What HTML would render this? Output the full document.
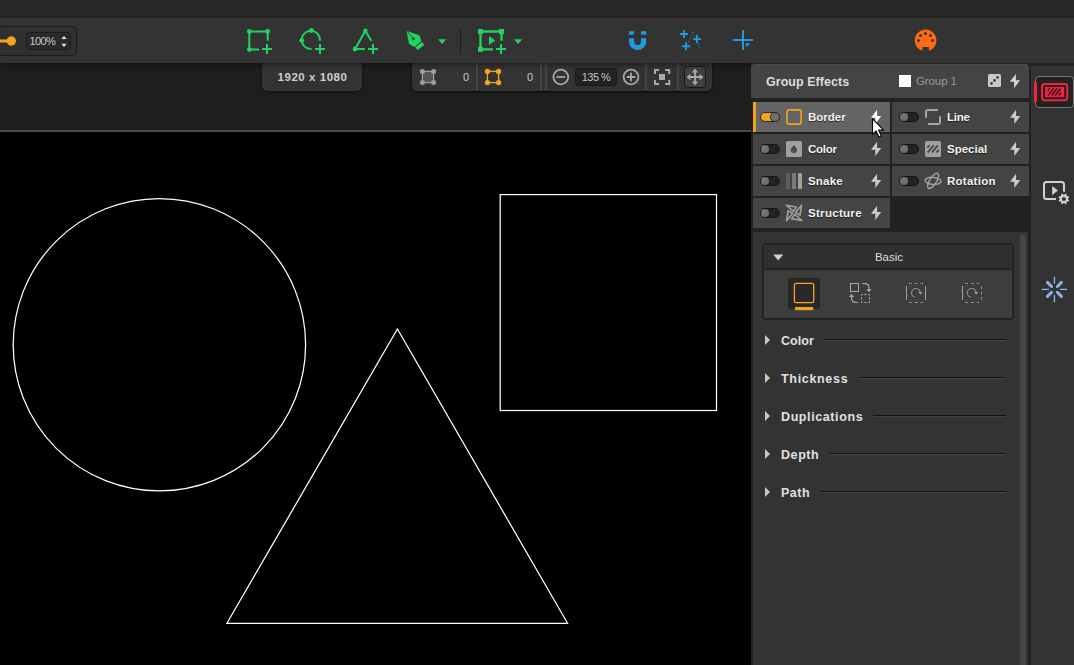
<!DOCTYPE html>
<html lang="en">
<head>
<meta charset="utf-8">
<title>Group Effects</title>
<style>
*{box-sizing:border-box;margin:0;padding:0}
html,body{width:1074px;height:665px;overflow:hidden;background:#1e1e1e;font-family:"Liberation Sans",sans-serif;color:#ddd}
#app{position:relative;width:1074px;height:665px;overflow:hidden;background:#1e1e1e}
.abs{position:absolute}
#topstrip{left:0;top:0;width:1074px;height:18px;background:#282828}
#toolbar{left:0;top:18px;width:1074px;height:45px;background:#333;box-shadow:0 1px 5px rgba(0,0,0,.6)}
#zoombox{left:-4px;top:26px;width:81px;height:30px;border:1px solid #1c1c1c;border-radius:5px;background:#303030}
#spin{left:26px;top:32px;width:45px;height:18px;border:1px solid #1c1c1c;border-radius:4px;background:#2a2a2a;font-size:11px;line-height:16px;color:#c8c8c8;padding-left:2.5px;letter-spacing:-.6px}
#canvasline{left:0;top:130px;width:751px;height:2px;background:#4a4a4a}
#canvas{left:0;top:132px;width:751px;height:533px;background:#000}
#dims{left:262px;top:63px;width:100px;height:28px;background:#333;border-radius:0 0 5px 5px;box-shadow:0 1px 3px rgba(0,0,0,.6);font-size:11.5px;font-weight:bold;letter-spacing:.55px;color:#cfcfcf;text-align:center;line-height:28px;padding-left:1px}
#ctb{left:412px;top:63px;width:300px;height:28px;background:#333;border-radius:0 0 5px 5px;box-shadow:0 1px 3px rgba(0,0,0,.6)}
.sep{position:absolute;top:0;width:2px;height:27px;background:#454545}
.num{position:absolute;top:0;font-size:11px;line-height:28px;color:#c4c4c4;text-align:right;width:20px}
#zpct{left:163px;top:5px;width:42px;height:18px;background:#222;border:1px solid #191919;border-radius:3px;font-size:11px;line-height:16px;text-align:center;color:#c4c4c4;letter-spacing:-.5px}
#movebtn{left:272px;top:3px;width:22px;height:22px;background:#3f4141;border:1px solid #181818;border-radius:4px}
/* right panel */
#ghead{left:751px;top:64px;width:278px;height:34px;background:#444;border-radius:4px 4px 0 0;border-top:1px solid #4e4e4e}
#gtitle{left:15px;top:-1px;font-size:12.5px;letter-spacing:.04px;font-weight:bold;line-height:36px;color:#dcdcdc}
#gname{left:165px;top:-1px;font-size:11.5px;letter-spacing:-.1px;line-height:34px;color:#9a9a9a}
.row{position:absolute;height:30px;background:#444}
.row.l{left:753px;width:137px}
.row.r{left:892px;width:137px}
.row.sel{background:#646464;border-left:3px solid #f5a21d}
.tog{position:absolute;left:7px;top:10px;width:20px;height:10px;border-radius:5px;background:#222;border:1px solid #151515}
.tog i{position:absolute;left:0;top:0;width:8px;height:8px;border-radius:4px;background:#727272}
.row.sel .tog{left:4px;background:#f5a21d;border-color:#2a2a2a}
.row.sel .tog i{left:10px;background:#707070;box-shadow:0 0 0 1px #2a2a2a}
.ico{position:absolute;left:33px;top:7px;width:16px;height:16px}
.row.sel .ico{left:30px}
.lbl{position:absolute;left:55px;top:0;font-size:11.5px;font-weight:bold;line-height:30px;color:#f2f2f2;text-shadow:0 1px 1px rgba(0,0,0,.6)}
.row.sel .lbl{left:52px}
.bolt{position:absolute;left:117px;top:8px;width:12px;height:15px}
.row.sel .bolt{left:114px}
#lower{left:753px;top:232px;width:275px;height:433px;background:#333}
#pbg{left:751px;top:63px;width:280px;height:602px;background:#222}
#scroll{left:1020px;top:234px;width:6px;height:440px;background:#464646;border-radius:3px}
#basic{left:762px;top:243px;width:252px;height:77px;border:2px solid #232323;border-radius:4px;background:#3c3e3d;overflow:hidden}
#basichd{left:0;top:0;width:248px;height:25px;background:#303030;border-bottom:2px solid #232323;font-size:11.5px;line-height:24px;text-align:center;color:#ddd;padding-left:2px}
#selbtn{left:24px;top:33px;width:32px;height:31px;background:#292929;border-radius:3px;border:1px solid #252525}
.sec{position:absolute;left:765px;width:241px;height:20px}
.sec .tri{position:absolute;left:0;top:5px;width:0;height:0;border-left:5.5px solid #c8c8c2;border-top:5px solid transparent;border-bottom:5px solid transparent}
.sec span{position:absolute;left:16px;top:0;font-size:12.5px;letter-spacing:.5px;font-weight:bold;line-height:23px;color:#e0e0e0}
.sec b{position:absolute;right:0;top:9px;height:2px;background:#121212;border-bottom:1px solid #444}
/* sidebar */
#sidetop{left:1029px;top:63px;width:45px;height:3px;background:#222}
#sidegap{left:1029px;top:63px;width:2px;height:602px;background:#222}
#side{left:1031px;top:66px;width:43px;height:599px;background:#333}
#sbtn{left:1035px;top:76px;width:39px;height:32px;background:#222;border:1px solid #777;border-radius:4px}
#sbar{left:1034px;top:82px;width:3px;height:20px;background:#f5213d}
svg{position:absolute;overflow:visible}
</style>
</head>
<body>
<div id="app">
  <div class="abs" id="topstrip"></div>
  <div class="abs" id="canvasline"></div>
  <div class="abs" id="canvas"></div>
  <svg class="abs" style="left:0;top:0" width="751" height="665" viewBox="0 0 751 665" fill="none" stroke="#fff" stroke-width="1.25">
    <circle cx="159.4" cy="344.7" r="146.2"/>
    <rect x="500.2" y="194.6" width="216.3" height="215.9"/>
    <path d="M397.4 329 L567.6 623.3 L226.9 623.3 Z"/>
  </svg>
  <div class="abs" id="dims">1920 x 1080</div>
  <div class="abs" id="ctb">
    <div class="sep" style="left:64px"></div>
    <div class="sep" style="left:128px"></div>
    <div class="sep" style="left:133px"></div>
    <div class="sep" style="left:233px"></div>
    <div class="sep" style="left:265px"></div>
    <div class="num" style="left:37px">0</div>
    <div class="num" style="left:101px">0</div>
    <div class="abs" id="zpct">135 %</div>
    <div class="abs" id="movebtn"></div>
  </div>

  <!-- canvas toolbar icons -->
  <svg class="abs" style="left:0;top:0" width="1074" height="100" viewBox="0 0 1074 100">
    <g>
      <rect x="422.4" y="71.4" width="11.2" height="11.2" fill="#555" stroke="#9c9c9c" stroke-width="1.3"/>
      <g fill="#9c9c9c"><circle cx="422.4" cy="71.4" r="2.5"/><circle cx="433.6" cy="71.4" r="2.5"/><circle cx="422.4" cy="82.6" r="2.5"/><circle cx="433.6" cy="82.6" r="2.5"/></g>
      <rect x="487.4" y="71.4" width="11.2" height="11.2" fill="none" stroke="#f9a51a" stroke-width="1.3"/>
      <g fill="#f9a51a"><circle cx="487.4" cy="71.4" r="2.6"/><circle cx="498.6" cy="71.4" r="2.6"/><circle cx="487.4" cy="82.6" r="2.6"/><circle cx="498.6" cy="82.6" r="2.6"/></g>
    </g>
    <g fill="none" stroke="#a8a8a8" stroke-width="1.8">
      <circle cx="560.8" cy="77" r="7.4"/><path d="M556.5 77 H565.1"/>
      <circle cx="631" cy="77" r="7.4"/><path d="M626.7 77 H635.3 M631 72.7 V81.3"/>
      <path d="M655 74 V70 H659 M665.2 70 H669.2 V74 M669.2 80 V84 H665.2 M659 84 H655 V80" stroke-width="2"/>
    </g>
    <rect x="659" y="74" width="6" height="6" fill="#a8a8a8"/>
    <g fill="#a8a8a8" stroke="#a8a8a8" stroke-width="1.8">
      <path d="M689 77 H701 M695 71 V83" fill="none"/>
      <path d="M695 68.6 L698.2 72.4 H691.8 Z M695 85.4 L698.2 81.6 H691.8 Z M686.6 77 L690.4 73.8 V80.2 Z M703.4 77 L699.6 73.8 V80.2 Z" stroke="none"/>
    </g>
  </svg>
  <div class="abs" id="toolbar"></div>
  <div class="abs" id="zoombox"></div>
  <div class="abs" id="spin">100%</div>


  <!-- toolbar icons -->
  <svg class="abs" style="left:0;top:0" width="1074" height="64" viewBox="0 0 1074 64">
    <!-- slider -->
    <rect x="-2" y="39.5" width="12" height="3" fill="#f5a21d"/>
    <circle cx="11.3" cy="41" r="4.7" fill="#f5a21d"/>
    <!-- spin arrows -->
    <path d="M61.4 39 L66.6 39 L64 35.9 Z M61.4 43.8 L66.6 43.8 L64 46.9 Z" fill="#e6e6e6"/>
    <g fill="#1fd45f" stroke="#1fd45f" stroke-width="2" stroke-linecap="butt">
      <!-- rect+ -->
      <path d="M267.7 40.7 V31.5 H249.3 V49.6 H259" fill="none"/>
      <circle cx="249.3" cy="31.5" r="2.4" stroke="none"/><circle cx="267.7" cy="31.5" r="2.4" stroke="none"/><circle cx="249.3" cy="49.6" r="2.4" stroke="none"/>
      <path d="M262 49 H272 M267 44 V54" fill="none"/>
      <!-- circle+ -->
      <path d="M319.9 40.8 A9.1 9.1 0 1 0 311.5 49" fill="none" stroke-width="1.9"/>
      <circle cx="311.3" cy="30.5" r="2.4" stroke="none"/><circle cx="301.7" cy="40.4" r="2.4" stroke="none"/>
      <path d="M315 49 H325 M320 44 V54" fill="none"/>
      <!-- triangle+ -->
      <path d="M371.3 40.7 L365.4 30.8 L355.1 49 H364.8" fill="none" stroke-linejoin="round"/>
      <circle cx="365.4" cy="30.8" r="2.2" stroke="none"/><circle cx="355.1" cy="49" r="2.4" stroke="none"/>
      <path d="M368 49 H378 M373 44 V54" fill="none"/>
      <!-- pen -->
      <path d="M406.4 30.7 L419.6 35.5 L421.3 40.9 L414.8 46.9 L409.1 43.9 Z" stroke="none"/>
      <path d="M422.1 41.8 L424.2 45 L417.7 50.1 L415.4 47.5 Z" stroke="none"/>
      <circle cx="413.4" cy="38.7" r="1.5" fill="#333" stroke="none"/>
      <path d="M406.8 31.2 L412.6 37.8" stroke="#333" stroke-width=".8" fill="none"/>
      <path d="M438 39.2 H446.2 L442.1 44 Z" stroke="none"/>
      <!-- play rect + -->
      <path d="M501.5 40.8 V31.5 H480.5 V49.3 H493" fill="none" stroke-width="2.3"/>
      <rect x="478" y="29" width="5" height="5" stroke="none"/><rect x="499" y="29" width="5" height="5" stroke="none"/><rect x="478" y="46.8" width="5" height="5" stroke="none"/>
      <path d="M489 36.1 L495.3 40.5 L489 45 Z" stroke="none"/>
      <path d="M496 49 H506 M501 44 V54" fill="none"/>
      <path d="M514 39.2 H522.2 L518.1 44 Z" stroke="none"/>
    </g>
    <rect x="460" y="28" width="1" height="26" fill="#1e1e1e"/>
    <g fill="#1e9be0" stroke="#1e9be0">
      <!-- magnet -->
      <rect x="629" y="31.2" width="5.1" height="3.5" stroke="none"/><rect x="641.1" y="31.2" width="5.1" height="3.5" stroke="none"/>
      <path d="M629 38.2 H634.1 V41.4 A3.5 3.5 0 0 0 641.1 41.4 V38.2 H646.2 V41.4 A8.6 8.6 0 0 1 629 41.4 Z" stroke="none"/>
      <!-- sparkle -->
      <path d="M680 34 H688 M684 30 V38 M693 39.1 H701 M697 35.1 V43.1 M682 46.3 H690 M686 42.3 V50.3" stroke-width="1.9" fill="none"/>
      <path d="M692.8 31.8 L687.5 44.5 M693 32 L700.8 50" stroke-width=".9" stroke-dasharray="1.6 1.6" fill="none" opacity=".75"/>
      <!-- crosshair -->
      <path d="M732.8 40 H753.1 M743 29.9 V50" stroke-width="2" fill="none"/>
      <path d="M745.9 43.2 H750.5 L745.9 47.6 Z" stroke="none"/>
    </g>
    <!-- midi -->
    <g>
      <path d="M922.3 50.8 A10.85 10.85 0 1 1 928.9 50.8 V47.1 H922.3 Z" fill="#ff6a10"/>
      <g fill="#333"><circle cx="925.4" cy="33.4" r="1.5"/><circle cx="920.5" cy="35.5" r="1.5"/><circle cx="930.5" cy="35.5" r="1.5"/><circle cx="918.5" cy="40.5" r="1.5"/><circle cx="932.5" cy="40.5" r="1.5"/></g>
    </g>
  </svg>

  <div class="abs" id="pbg"></div>
  <div class="abs" id="ghead">
    <div class="abs" id="gtitle">Group Effects</div>
    <div class="abs" style="left:148px;top:10px;width:12px;height:12px;background:#fff"></div>
    <div class="abs" id="gname">Group 1</div>
  </div>
  <div class="row l sel" style="top:102px"><div class="tog"><i></i></div><div class="lbl">Border</div></div>
  <div class="row r" style="top:102px"><div class="tog"><i></i></div><div class="lbl" style="letter-spacing:-0.22px">Line</div></div>
  <div class="row l" style="top:134px"><div class="tog"><i></i></div><div class="lbl" style="letter-spacing:-0.25px">Color</div></div>
  <div class="row r" style="top:134px"><div class="tog"><i></i></div><div class="lbl">Special</div></div>
  <div class="row l" style="top:166px"><div class="tog"><i></i></div><div class="lbl" style="letter-spacing:0.18px">Snake</div></div>
  <div class="row r" style="top:166px"><div class="tog"><i></i></div><div class="lbl" style="letter-spacing:0.26px">Rotation</div></div>
  <div class="row l" style="top:198px"><div class="tog"><i></i></div><div class="lbl" style="letter-spacing:0.3px">Structure</div></div>

  <div class="abs" id="lower"></div>
  <div class="abs" id="scroll"></div>
  <div class="abs" id="basic">
    <div class="abs" id="basichd">Basic</div>
    <div class="abs" id="selbtn"></div>
  </div>
  <div class="sec" style="top:330px"><i class="tri"></i><span style="letter-spacing:.05px">Color</span><b style="left:59px"></b></div>
  <div class="sec" style="top:368px"><i class="tri"></i><span style="letter-spacing:.68px">Thickness</span><b style="left:93px"></b></div>
  <div class="sec" style="top:406px"><i class="tri"></i><span style="letter-spacing:.6px">Duplications</span><b style="left:108px"></b></div>
  <div class="sec" style="top:444px"><i class="tri"></i><span style="letter-spacing:.58px">Depth</span><b style="left:64px"></b></div>
  <div class="sec" style="top:482px"><i class="tri"></i><span style="letter-spacing:.5px">Path</span><b style="left:55px"></b></div>

  <div class="abs" id="sidetop"></div>
  <div class="abs" id="sidegap"></div>
  <div class="abs" id="side"></div>
  <div class="abs" id="sbtn"></div>
  <div class="abs" id="sbar"></div>

  <!-- panel icons -->
  <svg class="abs" style="left:0;top:0" width="1074" height="665" viewBox="0 0 1074 665">
<rect x="988" y="74" width="13" height="13" rx="1.6" fill="#c8c9c8"/>
<g fill="#444"><circle cx="997.5" cy="77.5" r="1.4"/><circle cx="994.5" cy="80.5" r="1.4"/><circle cx="991.5" cy="83.5" r="1.4"/></g>
<path d="M1015.9 73.9 L1015.9 80.2 L1020.1 80.2 L1014.1 88.2 L1014.1 81.8 L1009.8 81.8 Z" fill="#d2d5d5"/>
<path d="M877.1 109.8 L877.1 116.1 L881.3 116.1 L875.3 124.1 L875.3 117.7 L871.0 117.7 Z" fill="#fff"/>
<path d="M877.1 141.8 L877.1 148.1 L881.3 148.1 L875.3 156.1 L875.3 149.7 L871.0 149.7 Z" fill="#c9cccc"/>
<path d="M877.1 173.8 L877.1 180.1 L881.3 180.1 L875.3 188.1 L875.3 181.7 L871.0 181.7 Z" fill="#c9cccc"/>
<path d="M877.1 205.8 L877.1 212.1 L881.3 212.1 L875.3 220.1 L875.3 213.7 L871.0 213.7 Z" fill="#c9cccc"/>
<path d="M1016.1 109.8 L1016.1 116.1 L1020.3 116.1 L1014.3 124.1 L1014.3 117.7 L1010.0 117.7 Z" fill="#c9cccc"/>
<path d="M1016.1 141.8 L1016.1 148.1 L1020.3 148.1 L1014.3 156.1 L1014.3 149.7 L1010.0 149.7 Z" fill="#c9cccc"/>
<path d="M1016.1 173.8 L1016.1 180.1 L1020.3 180.1 L1014.3 188.1 L1014.3 181.7 L1010.0 181.7 Z" fill="#c9cccc"/>
<rect x="787" y="109.9" width="14.2" height="14.2" rx="2.4" fill="none" stroke="#f5a21d" stroke-width="1.6"/>
<rect x="786" y="141" width="16" height="16" rx="1.6" fill="#9fa1a0"/>
<path d="M793.9 145.1 C795.5 147.2 797 148.6 797 150 A3.1 3 0 0 1 790.8 150 C790.8 148.6 792.3 147.2 793.9 145.1 Z" fill="#454545"/>
<path d="M792.2 149.5 A1.9 1.9 0 0 0 795.2 151.4 A2.6 2.6 0 0 1 792.2 149.5 Z" fill="#9fa1a0" opacity=".85"/>
<rect x="786" y="173" width="4" height="16" fill="#5c5e60"/><rect x="792" y="173" width="4" height="16" fill="#7c7a78"/><rect x="798" y="173" width="4" height="16" rx="1" fill="#a0a2a0"/>
<g transform="translate(794.1 212.9)" fill="none" stroke="#9c9e9e" stroke-width="1.7" stroke-linejoin="round"><path d="M-7.7 -7.5 L2.3 -5.9 L-0.6 -1.5 Z" transform="rotate(0)"/><path d="M-7.7 -7.5 L2.3 -5.9 L-0.6 -1.5 Z" transform="rotate(90)"/><path d="M-7.7 -7.5 L2.3 -5.9 L-0.6 -1.5 Z" transform="rotate(180)"/><path d="M-7.7 -7.5 L2.3 -5.9 L-0.6 -1.5 Z" transform="rotate(270)"/></g>
<path d="M926 117.8 V112.1 Q926 110.1 928 110.1 H938 M928 124 H938 Q940 124 940 122 V116.2" fill="none" stroke="#a4a6a5" stroke-width="2"/>
<rect x="925" y="141" width="16" height="16" rx="1.6" fill="#a0a2a1"/>
<path d="M929.8 145.4 L927.2 147.6 M933.9 145.4 L927.6 152.4 M938 145.4 L931.9 152.4 M939 149.9 L936.4 152.4" stroke="#454545" stroke-width="1.7" fill="none"/>
<g fill="none" stroke="#9c9ea0" stroke-width="1.5"><ellipse cx="933.1" cy="180.9" rx="3.4" ry="8.7" transform="rotate(33 933.1 180.9)"/><ellipse cx="933.1" cy="180.9" rx="7.9" ry="3.5" transform="rotate(4 933.1 180.9)"/></g>
<path d="M773.2 254.6 H783.2 L778.2 260.4 Z" fill="#d0d0d0"/>
<rect x="794.4" y="283.4" width="19.3" height="19.3" rx="1.6" fill="none" stroke="#f5a21d" stroke-width="1.3"/>
<rect x="795" y="307" width="18.2" height="3.2" fill="#f5a21d"/>
<g fill="none" stroke="#a8a8a8" stroke-width="1"><rect x="850.5" y="283.5" width="8" height="8"/><rect x="861.5" y="294.5" width="8" height="8" stroke-dasharray="2.4 1.6" stroke-dashoffset="1.2"/><path d="M862.3 283.6 H864.5 Q869 283.6 869 288.3 V290.5" stroke-width="1.2"/><path d="M858.2 302.5 H856 Q851.5 302.5 851.5 297.8 V295.6" stroke-width="1.2"/></g>
<path d="M866.4 289.2 H871.6 L869 292.2 Z M848.9 296.9 H854.1 L851.5 293.9 Z" fill="#a8a8a8"/>
<g stroke="#a0a0a0" stroke-width="1" fill="none"><path d="M906.5 286 V300 M925.5 286 V300"/><path d="M909 283.5 H923 M909 302.5 H923" stroke-dasharray="2.8 3" opacity=".9"/></g>
<path d="M914.9 297.1 A4.4 4.4 0 1 1 920.4 292.6" fill="none" stroke="#9e9e9e" stroke-width=".95"/><path d="M918.4 292.1 H922.3 L920.4 294.7 Z" fill="#9e9e9e"/>
<g stroke="#a0a0a0" stroke-width="1" fill="none"><path d="M962.5 286 V300"/><path d="M981.5 286.3 V300" stroke-dasharray="2.6 2.8" opacity=".9"/><path d="M965.2 283.5 H979 M965.2 302.5 H979" stroke-dasharray="2.8 3" opacity=".9"/></g>
<path d="M970.7 297.1 A4.4 4.4 0 1 1 976.2 292.6" fill="none" stroke="#9e9e9e" stroke-width=".95"/><path d="M974.2 292.1 H978.1 L976.2 294.7 Z" fill="#9e9e9e"/>
<rect x="1042" y="84" width="25.3" height="16.2" rx="2.6" fill="none" stroke="#f5213d" stroke-width="2"/>
<rect x="1045" y="87" width="19.2" height="10.2" fill="#f5213d"/>
<path d="M1049.9 88.2 L1047.6 90.5 M1053.5 88.2 L1048.2 95.6 M1057.1 88.2 L1051.7 95.6 M1060.5 88.5 L1055.2 95.6 M1061.2 92.8 L1058.6 95.6" stroke="#2a1a1c" stroke-width="1.5" fill="none"/>
<path d="M1064 191.8 V184.5 Q1064 182 1061.5 182 H1046.5 Q1044 182 1044 184.5 V196.5 Q1044 199 1046.5 199 H1056" fill="none" stroke="#cfd2d2" stroke-width="2"/>
<path d="M1052.2 186.1 L1058 190.5 L1052.2 195 Z" fill="#cfd2d2"/>
<g transform="translate(1063.9 198.9)"><circle r="3.1" fill="none" stroke="#cfd2d2" stroke-width="2.2"/><rect x="-1" y="-5.3" width="2" height="2.2" fill="#cfd2d2" transform="rotate(22.5)"/><rect x="-1" y="-5.3" width="2" height="2.2" fill="#cfd2d2" transform="rotate(67.5)"/><rect x="-1" y="-5.3" width="2" height="2.2" fill="#cfd2d2" transform="rotate(112.5)"/><rect x="-1" y="-5.3" width="2" height="2.2" fill="#cfd2d2" transform="rotate(157.5)"/><rect x="-1" y="-5.3" width="2" height="2.2" fill="#cfd2d2" transform="rotate(202.5)"/><rect x="-1" y="-5.3" width="2" height="2.2" fill="#cfd2d2" transform="rotate(247.5)"/><rect x="-1" y="-5.3" width="2" height="2.2" fill="#cfd2d2" transform="rotate(292.5)"/><rect x="-1" y="-5.3" width="2" height="2.2" fill="#cfd2d2" transform="rotate(337.5)"/></g>
<g transform="translate(1054.45 289.4)" stroke="#8cb4e8" fill="none"><path d="M0 -12.6 V-5.6 M0 5.6 V12.8 M-12.7 0 H-5.5 M5.5 0 H12.7" stroke-width="1.3"/><path d="M-7 -7 L-2.9 -2.9 M7 -7 L2.9 -2.9 M-7 7 L-2.9 2.9 M7 7 L2.9 2.9" stroke-width="3" stroke-linecap="round"/></g>
<path d="M872.5 118.6 V134.4 L876.1 131 L878.8 137 L881.2 135.9 L878.6 130.1 H883.6 Z" fill="#fff" stroke="#000" stroke-width="1.1" stroke-linejoin="round"/>
</svg>
</div>
</body>
</html>
